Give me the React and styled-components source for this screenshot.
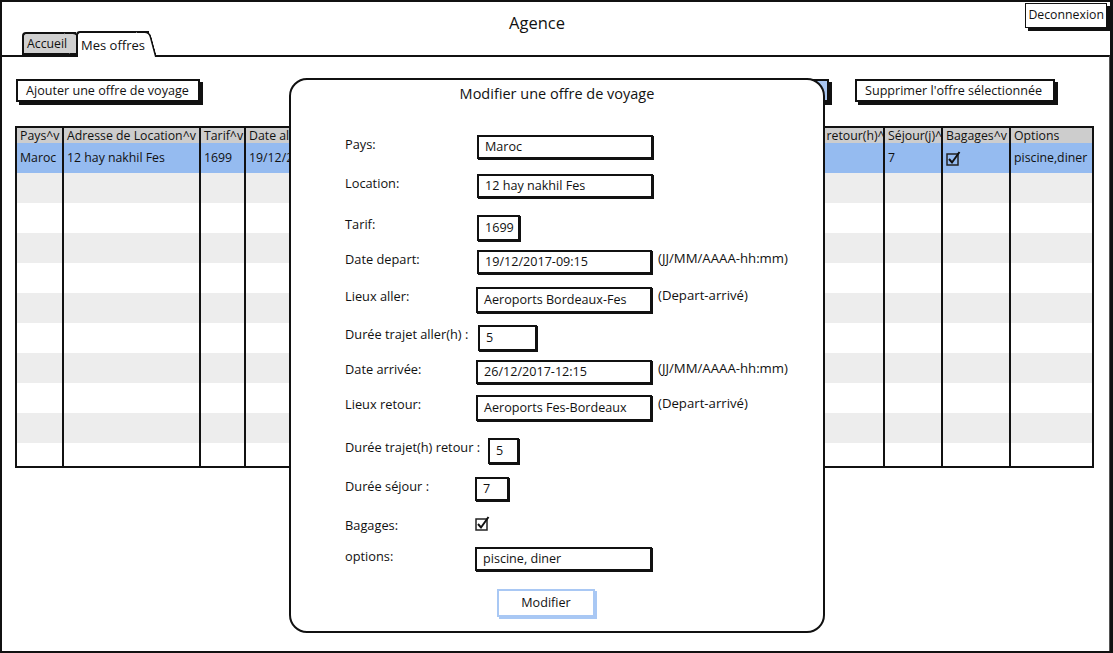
import React from "react";
import styled, { createGlobalStyle } from "styled-components";

const GlobalStyle = createGlobalStyle`
  body {
    margin: 0;
    font-family: "Open Sans", "DejaVu Sans", sans-serif;
    color: #111;
  }
`;

const Window = styled.div`
  position: relative;
  width: 1113px;
  height: 653px;
  box-sizing: border-box;
  border: 2px solid #111;
  border-right-width: 3px;
  display: flex;
  flex-direction: column;
  background: #fff;
  overflow: hidden;
`;

const TopBar = styled.div`
  height: 29px;
  display: flex;
  align-items: flex-start;
`;

const AppTitle = styled.div`
  margin: 11px 0 0 507px;
  font-size: 16.5px;
  line-height: 20px;
`;

const LogoutButton = styled.div`
  margin: 1px 3px 0 auto;
  height: 25px;
  box-sizing: border-box;
  border: 1.5px solid #111;
  box-shadow: 3px 3px 0 #111;
  padding: 0 2px;
  font-size: 12.3px;
  line-height: 22px;
  background: #fff;
`;

const TabRow = styled.div`
  height: 24px;
  display: flex;
  align-items: flex-end;
  padding-left: 20px;
`;

const Tab = styled.div`
  position: relative;
  z-index: 1;
  box-sizing: border-box;
  width: ${(p) => p.$w}px;
  height: ${(p) => (p.$active ? 26 : 23)}px;
  margin-bottom: ${(p) => (p.$active ? -2 : 0)}px;
  border: 2px solid #111;
  border-right: none;
  border-bottom: ${(p) => (p.$active ? "none" : "2px solid #111")};
  border-radius: 4px 0 0 0;
  background: ${(p) => (p.$active ? "#fff" : "#d0d0d0")};
  padding: ${(p) => (p.$active ? "4px 0 0 3px" : "2px 0 0 3px")};
  font-size: ${(p) => (p.$active ? 13 : 12.3)}px;
  line-height: 16px;
  white-space: nowrap;

  &::after {
    content: "";
    position: absolute;
    z-index: -1;
    top: -2px;
    bottom: ${(p) => (p.$active ? 0 : -2)}px;
    right: -8px;
    width: 14px;
    box-sizing: border-box;
    background: ${(p) => (p.$active ? "#fff" : "#d0d0d0")};
    border-top: 2px solid #111;
    border-right: 2px solid #111;
    border-bottom: ${(p) => (p.$active ? "none" : "2px solid #111")};
    border-top-right-radius: 6px;
    transform: skewX(15deg);
    transform-origin: bottom left;
  }
`;

const Panel = styled.div`
  flex: 1;
  border-top: 2px solid #111;
  border-right: 1px solid #555;
  padding: 22px 0 0 14px;
`;

const Toolbar = styled.div`
  display: flex;
  align-items: flex-start;
`;

const ToolButton = styled.div`
  width: ${(p) => p.$w}px;
  margin-left: ${(p) => p.$ml || 0}px;
  height: 23px;
  box-sizing: border-box;
  border: 2px solid #111;
  box-shadow: 3px 3px 0 #111;
  padding: 0 8px;
  font-size: 12.6px;
  line-height: 19px;
  white-space: nowrap;
  overflow: hidden;
  background: ${(p) => (p.$selected ? "#a9c6f1" : "#fff")};
`;

const Table = styled.div`
  margin: 24px 0 0 -1px;
  width: 1079px;
  height: 342px;
  box-sizing: border-box;
  border: 2px solid #111;
  overflow: hidden;
`;

const cols = "45px 137px 45px 95px 135px 95px 95px 119px 100px 58px 68px 83px";

const HeadRow = styled.div`
  display: grid;
  grid-template-columns: ${cols};
  height: 15px;
  background: #cdcdcd;
`;

const Row = styled.div`
  display: grid;
  grid-template-columns: ${cols};
  height: 30px;
  background: ${(p) => (p.$selected ? "#95bbf0" : p.$odd ? "#ededed" : "#fff")};
`;

const Cell = styled.div`
  border-left: ${(p) => (p.$first ? "none" : "2px solid #111")};
  padding: 0 3px;
  overflow: hidden;
  white-space: nowrap;
  font-size: 12.3px;
  line-height: ${(p) => (p.$head ? 15 : 30)}px;
  display: flex;
  align-items: center;
`;

const Dialog = styled.div`
  position: absolute;
  z-index: 5;
  left: 287px;
  top: 76px;
  width: 536px;
  height: 555px;
  box-sizing: border-box;
  border: 2px solid #111;
  border-radius: 18px;
  background: #fff;
  padding: 5px 0 0 54px;
`;

const DialogTitle = styled.div`
  margin-left: -54px;
  text-align: center;
  font-size: 14.5px;
  line-height: 18px;
`;

const Form = styled.div`
  margin-top: 32px;
  display: flex;
  flex-direction: column;
`;

const Field = styled.div`
  display: flex;
  align-items: flex-start;
  height: ${(p) => p.$h}px;
`;

const Label = styled.div`
  width: ${(p) => p.$w}px;
  flex-shrink: 0;
  margin-top: 2px;
  font-size: 12.8px;
  line-height: 14px;
  white-space: nowrap;
`;

const Input = styled.div`
  width: ${(p) => p.$w}px;
  height: ${(p) => p.$ih}px;
  box-sizing: border-box;
  border: 2px solid #111;
  box-shadow: 1px 1px 0 #111;
  padding: 0 6px;
  font-size: 12.6px;
  line-height: ${(p) => p.$ih - 4}px;
  white-space: nowrap;
  overflow: hidden;
`;

const Hint = styled.div`
  margin: 1px 0 0 6px;
  font-size: 13.2px;
  line-height: 14px;
  white-space: nowrap;
`;

const SubmitButton = styled.div`
  margin-left: 152px;
  width: 98px;
  height: 28px;
  box-sizing: border-box;
  border: 2px solid #a9c8f4;
  box-shadow: 2px 2px 0 #a9c8f4;
  text-align: center;
  font-size: 12.6px;
  line-height: 24px;
`;

const CheckBox = () => (
  <svg width="15" height="15" viewBox="0 0 15 15">
    <rect x="1" y="3" width="11" height="11" fill="none" stroke="#222" strokeWidth="1.5" />
    <path d="M3 8 L6 11.5 L13.5 1" fill="none" stroke="#111" strokeWidth="2" />
  </svg>
);

const headers = [
  "Pays^v",
  "Adresse de Location^v",
  "Tarif^v",
  "Date aller^v",
  "Lieux aller^v",
  "Durée aller(h)^v",
  "Date arrivée^v",
  "Lieux retour^v",
  "Durée retour(h)^v",
  "Séjour(j)^v",
  "Bagages^v",
  "Options",
];

const firstRow = [
  "Maroc",
  "12 hay nakhil Fes",
  "1699",
  "19/12/2017-09:15",
  "Aeroports Bordeaux-Fes",
  "5",
  "26/12/2017-12:15",
  "Aeroports Fes-Bordeaux",
  "5",
  "7",
  "check",
  "piscine,diner",
];

const fields = [
  { label: "Pays:", value: "Maroc", w: 176, ih: 24, h: 39, x: 132 },
  { label: "Location:", value: "12 hay nakhil Fes", w: 176, ih: 24, h: 41, x: 132 },
  { label: "Tarif:", value: "1699", w: 43, ih: 26, h: 35, x: 132 },
  { label: "Date depart:", value: "19/12/2017-09:15", w: 175, ih: 24, h: 37, x: 132, hint: "(JJ/MM/AAAA-hh:mm)" },
  { label: "Lieux aller:", value: "Aeroports Bordeaux-Fes", w: 176, ih: 26, h: 38, x: 131, hint: "(Depart-arrivé)" },
  { label: "Durée trajet aller(h) :", value: "5", w: 59, ih: 26, h: 35, x: 133 },
  { label: "Date arrivée:", value: "26/12/2017-12:15", w: 176, ih: 24, h: 35, x: 131, hint: "(JJ/MM/AAAA-hh:mm)" },
  { label: "Lieux retour:", value: "Aeroports Fes-Bordeaux", w: 176, ih: 26, h: 43, x: 131, hint: "(Depart-arrivé)" },
  { label: "Durée trajet(h) retour :", value: "5", w: 31, ih: 26, h: 39, x: 143 },
  { label: "Durée séjour :", value: "7", w: 34, ih: 24, h: 39, x: 130 },
  { label: "Bagages:", check: true, h: 31, x: 130 },
  { label: "options:", value: "piscine, diner", w: 177, ih: 24, h: 42, x: 130 },
];

export default function App() {
  const emptyRows = Array.from({ length: 10 }, (_, i) => i);
  return (
    <>
      <GlobalStyle />
      <Window>
        <TopBar>
          <AppTitle>Agence</AppTitle>
          <LogoutButton>Deconnexion</LogoutButton>
        </TopBar>
        <TabRow>
          <Tab $w={54}>Accueil</Tab>
          <Tab $w={73} $active>Mes offres</Tab>
        </TabRow>
        <Panel>
          <Toolbar>
            <ToolButton $w={184}>Ajouter une offre de voyage</ToolButton>
            <ToolButton $w={200} $ml={429} $selected>
              Modifier l'offre sélectionnée
            </ToolButton>
            <ToolButton $w={200} $ml={26}>
              Supprimer l'offre sélectionnée
            </ToolButton>
          </Toolbar>
          <Table>
            <HeadRow>
              {headers.map((h, i) => (
                <Cell key={h} $head $first={i === 0}>
                  {h}
                </Cell>
              ))}
            </HeadRow>
            <Row $selected>
              {firstRow.map((v, i) => (
                <Cell key={i} $first={i === 0}>
                  {v === "check" ? <CheckBox /> : v}
                </Cell>
              ))}
            </Row>
            {emptyRows.map((r) => (
              <Row key={r} $odd={r % 2 === 0}>
                {headers.map((h, i) => (
                  <Cell key={h} $first={i === 0} />
                ))}
              </Row>
            ))}
          </Table>
        </Panel>

        <Dialog>
          <DialogTitle>Modifier une offre de voyage</DialogTitle>
          <Form>
            {fields.map((f) => (
              <Field key={f.label} $h={f.h}>
                <Label $w={f.x}>{f.label}</Label>
                {f.check ? (
                  <CheckBox />
                ) : (
                  <Input $w={f.w} $ih={f.ih}>
                    {f.value}
                  </Input>
                )}
                {f.hint && <Hint>{f.hint}</Hint>}
              </Field>
            ))}
            <SubmitButton>Modifier</SubmitButton>
          </Form>
        </Dialog>
      </Window>
    </>
  );
}
